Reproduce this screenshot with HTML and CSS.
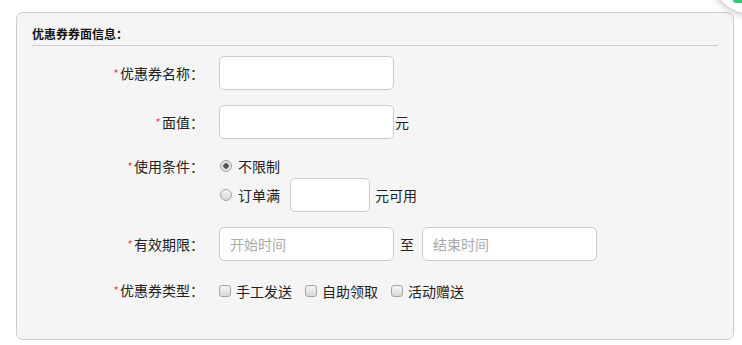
FILE: index.html
```html
<!DOCTYPE html>
<html lang="zh-CN">

<head>
    <meta charset="UTF-8">
    <meta name="viewport" content="width=device-width, initial-scale=1.0">
    <title>优惠券券面信息</title>
    <link rel="stylesheet" href="styles.css">
</head>

<body>
    <!-- floating button peeking in at the top right -->
    <div class="corner">
        <div class="float-btn"><span class="float-dot"></span></div>
    </div>

    <div class="panel">
        <div class="panel-title">优惠券券面信息：</div>

        <form class="coupon-form">
            <div class="form-row">
                <label class="form-label"><i class="req">*</i>优惠券名称：</label>
                <input type="text" class="text-input">
            </div>

            <div class="form-row">
                <label class="form-label"><i class="req">*</i>面值：</label>
                <input type="text" class="text-input">
                <span class="unit">元</span>
            </div>

            <div class="form-row top">
                <label class="form-label line"><i class="req">*</i>使用条件：</label>
                <div class="options">
                    <label class="opt line"><input type="radio" name="cond" checked>不限制</label>
                    <label class="opt opt-full"><input type="radio" name="cond">订单满
                        <input type="text" class="text-input small">
                        <span class="after">元可用</span>
                    </label>
                </div>
            </div>

            <div class="form-row">
                <label class="form-label"><i class="req">*</i>有效期限：</label>
                <input type="text" class="text-input" placeholder="开始时间">
                <span class="to">至</span>
                <input type="text" class="text-input" placeholder="结束时间">
            </div>

            <div class="form-row last">
                <label class="form-label line"><i class="req">*</i>优惠券类型：</label>
                <label class="chk"><input type="checkbox">手工发送</label>
                <label class="chk"><input type="checkbox">自助领取</label>
                <label class="chk"><input type="checkbox">活动赠送</label>
            </div>
        </form>
    </div>
</body>
</html>
```

FILE: styles.css
```css
html {
    overflow: hidden;
}

body {
    font-family: "Noto Sans CJK SC", "Liberation Sans", sans-serif;
    font-size: 14px;
    color: #222;
    background-color: #fff;
    margin: 12px 8px 0 16px;
}

.corner {
    position: fixed;
    top: 0;
    right: 0;
    width: 40px;
    height: 30px;
    overflow: hidden;
}

.float-btn {
    position: absolute;
    left: 8px;
    top: -70px;
    width: 84px;
    height: 84px;
    border-radius: 50%;
    background-color: #fff;
    box-shadow: 0 1px 8px rgba(0, 0, 0, 0.3);
}

.float-dot {
    position: absolute;
    left: 23px;
    top: 67px;
    width: 16px;
    height: 6px;
    border-radius: 3px;
    background-color: #2ecc71;
}

.panel {
    background-color: #f5f5f5;
    border: 1px solid #ccc;
    border-radius: 7px;
    padding: 14px 15px 37px 15px;
}

.panel-title {
    font-size: 12px;
    font-weight: bold;
    color: #111;
    line-height: 14px;
    padding-bottom: 4px;
    border-bottom: 1px solid #ccc;
}

.coupon-form {
    margin-top: 10px;
}

.form-row {
    display: flex;
    align-items: center;
    margin-bottom: 15px;
}

.form-row.top {
    align-items: flex-start;
    margin-top: 16px;
}

.form-row.last {
    margin-top: 18px;
    margin-bottom: 0;
}

.form-label {
    width: 172px;
    margin-right: 15px;
    text-align: right;
    flex-shrink: 0;
}

.line {
    line-height: 22px;
}

.req {
    color: #e4393c;
    font-size: 11px;
    margin-right: 3px;
    position: relative;
    top: -1px;
}

.text-input {
    width: 175px;
    height: 34px;
    box-sizing: border-box;
    border: 1px solid #ccc;
    border-radius: 5px;
    background-color: #fff;
    padding: 0 10px;
    font-family: inherit;
    font-size: 14px;
    color: #333;
    margin: 0;
}

.text-input::placeholder {
    color: #aaa;
}

.text-input.small {
    width: 80px;
    margin-left: 10px;
}

.unit {
    margin-left: 1px;
}

.to {
    margin: 0 8px 0 6px;
}

.options {
    display: flex;
    flex-direction: column;
}

.opt {
    display: flex;
    align-items: center;
}

.opt-full {
    margin-top: 1px;
}

.opt input[type="radio"],
.chk input[type="checkbox"] {
    appearance: none;
    -webkit-appearance: none;
    width: 12px;
    height: 12px;
    margin: 0 6px 0 0;
    border: 1px solid #a6a6a6;
    background: linear-gradient(#f4f4f4, #d8d8d8);
    box-sizing: border-box;
    flex-shrink: 0;
}

.opt input[type="radio"] {
    border-radius: 50%;
    margin-left: 1px;
}

.opt input[type="radio"]:checked {
    background: radial-gradient(circle, #555 0, #555 2.5px, #e8e8e8 3px, #d4d4d4 100%);
}

.chk input[type="checkbox"] {
    border-radius: 3px;
    margin-right: 5px;
}

.after {
    margin-left: 5px;
}

.chk {
    display: flex;
    align-items: center;
    line-height: 22px;
    margin-right: 13px;
}
```
